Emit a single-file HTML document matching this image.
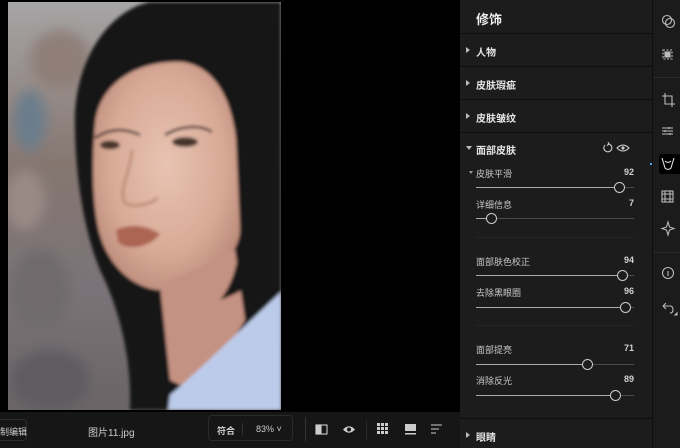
<!DOCTYPE html>
<html><head><meta charset="utf-8"><style>
*{margin:0;padding:0;box-sizing:border-box}
body{width:680px;height:448px;background:#000;overflow:hidden;position:relative;font-family:"Liberation Sans","Noto Sans CJK SC",sans-serif;color:#ddd}
.abs{position:absolute}
#panel{left:460px;top:0;width:192px;height:448px;background:#1c1c1c}
#tb{left:652px;top:0;width:28px;height:448px;background:#1b1b1b;border-left:1px solid #0e0e0e}
.line{position:absolute;left:0;width:192px;height:1px;background:#0f0f0f}
.sec{position:absolute;left:16px;font-size:10px;font-weight:bold;color:#e4e4e4}
.tri{position:absolute;left:6px;width:0;height:0;border-top:3px solid transparent;border-bottom:3px solid transparent;border-left:4px solid #bbb}
.lab{position:absolute;left:16px;font-size:9px;color:#c8c8c8}
.val{position:absolute;right:18px;font-size:9px;color:#d0d0d0;font-weight:bold}
.trk{position:absolute;left:16px;width:158px;height:1px;background:#4a4a4a}
.fill{position:absolute;left:0;top:0;height:1px;background:#aaa}
.knob{position:absolute;top:-5px;width:11px;height:11px;border-radius:50%;border:1.3px solid #ccc;background:#1c1c1c}
.sep{position:absolute;left:16px;width:158px;height:1px;background:#262626}
#bar{left:0;top:412px;width:460px;height:36px;background:#161616}
.bt{font-size:9px;color:#ccc}
</style></head><body>
<svg class="abs" style="left:8px;top:2px" width="273" height="408" viewBox="8 2 273 408">
<defs>
<filter id="b1"><feGaussianBlur stdDeviation="6"/></filter>
<filter id="b2"><feGaussianBlur stdDeviation="1.5"/></filter>
<linearGradient id="bg" x1="0" y1="0" x2="0" y2="1"><stop offset="0" stop-color="#a7a5a6"/><stop offset=".4" stop-color="#857670"/><stop offset=".7" stop-color="#7a7478"/><stop offset="1" stop-color="#6a6466"/></linearGradient>
<radialGradient id="sk" cx=".5" cy=".45" r=".65"><stop offset="0" stop-color="#e8c3b2"/><stop offset=".6" stop-color="#d8aa96"/><stop offset="1" stop-color="#b48272"/></radialGradient>
</defs>
<rect x="8" y="2" width="273" height="408" fill="url(#bg)"/>
<g filter="url(#b1)">
<ellipse cx="30" cy="120" rx="16" ry="30" fill="#6a7d8c"/>
<ellipse cx="25" cy="200" rx="20" ry="30" fill="#9a8a86"/>
<ellipse cx="40" cy="290" rx="30" ry="40" fill="#6f6a6c"/>
<ellipse cx="60" cy="60" rx="30" ry="30" fill="#8f7f78"/>
<ellipse cx="50" cy="380" rx="40" ry="30" fill="#5f5c60"/>
</g>
<g filter="url(#b2)">
<path d="M75 130 C72 60 110 10 150 2 L281 2 L281 410 L130 410 C132 360 120 310 100 270 C84 230 76 180 75 130Z" fill="#161314"/>
<path d="M95 125 C98 85 135 60 182 62 C215 66 232 100 236 140 L240 230 C238 262 205 284 158 290 C128 286 108 262 100 235 C92 205 92 160 95 125Z" fill="url(#sk)"/>
<path d="M160 285 L235 250 L245 320 L200 395 L170 380Z" fill="#c49282"/>
<path d="M170 395 C200 370 240 330 281 292 L281 410 L168 410Z" fill="#bccbea"/>
<path d="M220 300 C250 290 270 270 281 250 L281 140 C270 100 252 70 232 60 L242 200 C242 250 236 280 220 300Z" fill="#171415"/>
<path d="M116 230 C128 224 145 224 160 234 C150 248 126 251 118 242Z" fill="#ad6553"/>
<path d="M95 138 C110 128 125 128 140 135" stroke="#3a2a25" stroke-width="2.5" fill="none"/>
<path d="M165 135 C180 126 200 124 212 132" stroke="#3a2a25" stroke-width="2.5" fill="none"/>
<ellipse cx="110" cy="145" rx="10" ry="4.5" fill="#4a342c"/>
<ellipse cx="185" cy="142" rx="13" ry="5" fill="#4a342c"/>
<path d="M132 150 C130 175 118 190 125 203 C135 208 148 205 158 198" stroke="#c0907c" stroke-width="3" fill="none"/>
</g>
</svg>

<div id="panel" class="abs">
<div class="abs" style="left:16px;top:9px;font-size:13px;font-weight:bold;color:#eee">修饰</div>
<div class="line" style="top:33px"></div>
<div class="tri" style="top:47px"></div><div class="sec" style="top:44px">人物</div>
<div class="line" style="top:66px"></div>
<div class="tri" style="top:80px"></div><div class="sec" style="top:77px">皮肤瑕疵</div>
<div class="line" style="top:99px"></div>
<div class="tri" style="top:113px"></div><div class="sec" style="top:110px">皮肤皱纹</div>
<div class="line" style="top:132px"></div>
<div class="abs" style="left:6px;top:146px;border-left:3px solid transparent;border-right:3px solid transparent;border-top:4px solid #bbb"></div>
<div class="sec" style="top:142px">面部皮肤</div>
<svg class="abs" style="left:142px;top:142px" width="30" height="12"><path d="M3 3 A4 4 0 1 0 7 2 M6 0 L7 2 L5 3.5" stroke="#ccc" stroke-width="1.1" fill="none"/><path d="M15 6 Q21 0 27 6 Q21 12 15 6Z" stroke="#ccc" stroke-width="1.1" fill="none"/><circle cx="21" cy="6" r="1.6" fill="#ccc"/></svg>
<div class="abs" style="left:9px;top:171px;border-left:2px solid transparent;border-right:2px solid transparent;border-top:3px solid #999"></div>
<div class="lab" style="top:167px">皮肤平滑</div><div class="val" style="top:167px">92</div>
<div class="trk" style="top:187px"><div class="fill" style="width:143px"></div><div class="knob" style="left:138px"></div></div>
<div class="lab" style="top:198px">详细信息</div><div class="val" style="top:198px">7</div>
<div class="trk" style="top:218px"><div class="fill" style="width:15px"></div><div class="knob" style="left:10px"></div></div>
<div class="sep" style="top:237px"></div>
<div class="lab" style="top:255px">面部肤色校正</div><div class="val" style="top:255px">94</div>
<div class="trk" style="top:275px"><div class="fill" style="width:146px"></div><div class="knob" style="left:141px"></div></div>
<div class="lab" style="top:286px">去除黑眼圈</div><div class="val" style="top:286px">96</div>
<div class="trk" style="top:307px"><div class="fill" style="width:149px"></div><div class="knob" style="left:144px"></div></div>
<div class="sep" style="top:325px"></div>
<div class="lab" style="top:343px">面部提亮</div><div class="val" style="top:343px">71</div>
<div class="trk" style="top:364px"><div class="fill" style="width:111px"></div><div class="knob" style="left:106px"></div></div>
<div class="lab" style="top:374px">消除反光</div><div class="val" style="top:374px">89</div>
<div class="trk" style="top:395px"><div class="fill" style="width:139px"></div><div class="knob" style="left:134px"></div></div>
<div class="line" style="top:418px"></div>
<div class="tri" style="top:432px"></div><div class="sec" style="top:429px">眼睛</div>
</div>

<div id="tb" class="abs">
<div class="abs" style="left:0;top:77px;width:28px;height:1px;background:#2a2a2a"></div>
<div class="abs" style="left:0;top:252px;width:28px;height:1px;background:#2a2a2a"></div>
<div class="abs" style="left:6px;top:154px;width:22px;height:20px;background:#000;border-radius:3px"></div>
<svg class="abs" style="left:0;top:0" width="28" height="330" fill="none" stroke="#bbb" stroke-width="1.1">
<circle cx="14" cy="20" r="4.5"/><circle cx="17" cy="23" r="4.5"/>
<rect x="10" y="50" width="9" height="9" stroke-dasharray="2 1.5"/><rect x="12" y="52" width="5" height="5" fill="#bbb"/>
<path d="M12 93 V104 H22 M9 96 H19 V107"/>
<path d="M9 128 H20 M9 131 H20 M9 134 H20"/><path d="M16 127 V129 M12 130 V132 M17 133 V135"/>
<path d="M9 158 L12 168 Q15 171 18 168 L21 158 M12 161 Q15 164 18 161" stroke="#ddd"/>
<rect x="9" y="191" width="11" height="11"/><path d="M9 194 H20 M9 199 H20 M12 191 V202 M17 191 V202"/>
<path d="M15 222 L16.5 227 L21 228.5 L16.5 230 L15 235 L13.5 230 L9 228.5 L13.5 227Z"/>
<circle cx="15" cy="273" r="5.5"/><path d="M15 271 V276"/>
<path d="M10 306 H17 Q20 306 20 310 Q20 313 17 313 M10 306 L13 303 M10 306 L13 309"/><path d="M22 315 L24 315 L24 313Z" fill="#bbb"/>
</svg>
<div class="abs" style="left:-3px;top:163px;width:2px;height:2px;background:#4aa3e0"></div>
</div>

<div id="bar" class="abs">
<div class="abs" style="left:-4px;top:7px;width:31px;height:22px;border:1px solid #2c2c2c;border-radius:4px"></div>
<div class="abs bt" style="left:0;top:13px">制编辑</div>
<div class="abs bt" style="left:88px;top:12px;font-size:10px">图片11.jpg</div>
<div class="abs" style="left:208px;top:3px;width:85px;height:26px;border:1px solid #2a2a2a;border-radius:4px"></div>
<div class="abs bt" style="left:217px;top:12px;font-weight:bold">符合</div>
<div class="abs" style="left:242px;top:11px;width:1px;height:12px;background:#333"></div>
<div class="abs bt" style="left:256px;top:12px">83% ˅</div>
<div class="abs" style="left:305px;top:5px;width:1px;height:24px;background:#333"></div>
<div class="abs" style="left:366px;top:8px;width:1px;height:20px;background:#2a2a2a"></div>
<svg class="abs" style="left:310px;top:8px" width="140" height="20" fill="none" stroke="#ccc" stroke-width="1.1">
<rect x="6" y="5" width="11" height="9"/><rect x="6" y="5" width="5" height="9" fill="#ccc"/>
<path d="M33 9.5 Q39 3 45 9.5 Q39 16 33 9.5Z" fill="#ccc" stroke="none"/><circle cx="39" cy="9.5" r="2" fill="#161616" stroke="none"/>
<g fill="#ccc" stroke="none"><rect x="67" y="3" width="3" height="3"/><rect x="71" y="3" width="3" height="3"/><rect x="75" y="3" width="3" height="3"/><rect x="67" y="7" width="3" height="3"/><rect x="71" y="7" width="3" height="3"/><rect x="75" y="7" width="3" height="3"/><rect x="67" y="11" width="3" height="3"/><rect x="71" y="11" width="3" height="3"/><rect x="75" y="11" width="3" height="3"/>
<rect x="95" y="4" width="11" height="7"/><rect x="95" y="13" width="11" height="1.5"/></g>
<path d="M121 5 H132 M121 9 H129 M121 13 H126"/>
</svg>
</div>
</body></html>
